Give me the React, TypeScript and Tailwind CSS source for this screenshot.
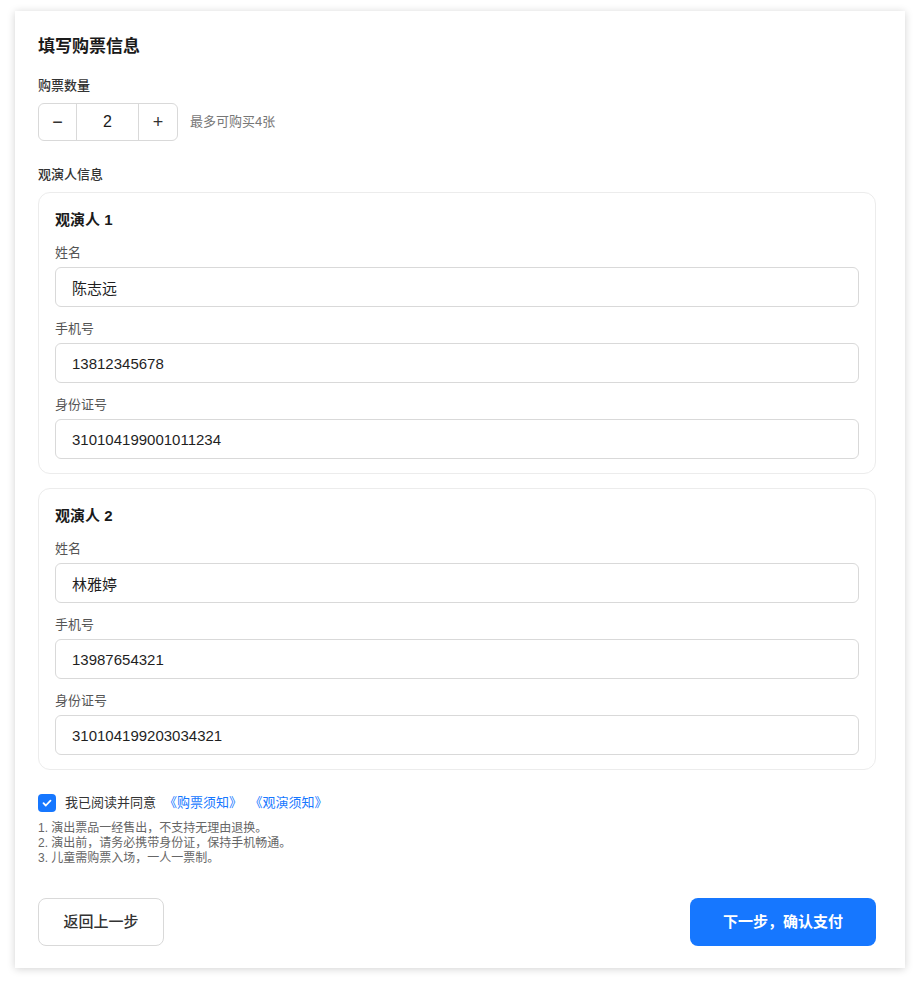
import React, { useState } from 'react';

type Viewer = { name: string; phone: string; id: string };

const viewers: Viewer[] = [
  { name: '陈志远', phone: '13812345678', id: '310104199001011234' },
  { name: '林雅婷', phone: '13987654321', id: '310104199203034321' },
];

function Field({ label, value }: { label: string; value: string }) {
  return (
    <div className="flex flex-col gap-1">
      <label className="text-[13px] leading-5 text-[#555]">{label}</label>
      <input
        readOnly
        value={value}
        className="h-10 w-full rounded-md border border-[#d9d9d9] bg-white px-4 text-[15px] text-[#1f1f1f] outline-none"
      />
    </div>
  );
}

function ViewerCard({ index, viewer }: { index: number; viewer: Viewer }) {
  return (
    <div className="flex flex-col gap-3 rounded-xl border border-[#ececec] px-4 pt-4 pb-[14px]">
      <div className="text-[15px] font-semibold leading-[22px] text-[#1a1a1a]">观演人 {index}</div>
      <Field label="姓名" value={viewer.name} />
      <Field label="手机号" value={viewer.phone} />
      <Field label="身份证号" value={viewer.id} />
    </div>
  );
}

export default function App() {
  const [count, setCount] = useState(2);
  const [agreed, setAgreed] = useState(true);

  return (
    <div className="min-h-screen bg-white px-[15px] pt-[11px] pb-5 font-['Liberation_Sans','Noto_Sans_CJK_SC',sans-serif]">
      <div className="flex flex-col bg-white pl-[23px] pr-[29px] pt-6 pb-[22px] shadow-[0_1px_8px_rgba(0,0,0,0.18)]">
        <h2 className="text-[17px] font-bold leading-6 text-[#1a1a1a]">填写购票信息</h2>

        {/* 数量 */}
        <div className="mt-[17px] text-[13px] font-medium leading-5 text-[#333]">购票数量</div>
        <div className="mt-[7px] flex items-center gap-3">
          <div className="flex h-[38px] overflow-hidden rounded-md border border-[#d9d9d9]">
            <button
              className="flex w-[37px] items-center justify-center text-lg text-[#333]"
              onClick={() => setCount(Math.max(1, count - 1))}
            >
              −
            </button>
            <div className="flex w-[63px] items-center justify-center border-x border-[#d9d9d9] text-base text-[#1a1a1a]">
              {count}
            </div>
            <button
              className="flex w-[38px] items-center justify-center text-lg text-[#333]"
              onClick={() => setCount(Math.min(4, count + 1))}
            >
              +
            </button>
          </div>
          <span className="text-[13px] text-[#777]">最多可购买4张</span>
        </div>

        {/* 观演人 */}
        <div className="mt-6 text-[13px] font-medium leading-5 text-[#333]">观演人信息</div>
        <div className="mt-[7px] flex flex-col gap-[14px]">
          {viewers.map((v, i) => (
            <ViewerCard key={i} index={i + 1} viewer={v} />
          ))}
        </div>

        {/* 协议 */}
        <div className="mt-[23px] flex items-center gap-[9px]">
          <button
            onClick={() => setAgreed(!agreed)}
            className={`flex h-[18px] w-[18px] items-center justify-center rounded-[4px] ${agreed ? 'bg-[#1677ff]' : 'border border-[#d9d9d9] bg-white'}`}
          >
            {agreed && (
              <svg width="12" height="12" viewBox="0 0 12 12" fill="none">
                <path d="M2.5 6.2l2.3 2.3 4.7-4.9" stroke="white" strokeWidth="1.8" strokeLinecap="round" strokeLinejoin="round" />
              </svg>
            )}
          </button>
          <span className="text-[13px] leading-5 text-[#333]">
            我已阅读并同意<a className="ml-[8px] text-[#1677ff]">《购票须知》</a>
            <a className="ml-[14px] text-[#1677ff]">《观演须知》</a>
          </span>
        </div>
        <div className="mt-2 text-[12px] leading-[15px] text-[#666]">
          <p>1. 演出票品一经售出，不支持无理由退换。</p>
          <p>2. 演出前，请务必携带身份证，保持手机畅通。</p>
          <p>3. 儿童需购票入场，一人一票制。</p>
        </div>

        {/* 按钮 */}
        <div className="mt-8 flex items-center justify-between">
          <button className="h-12 w-[126px] rounded-lg border border-[#d9d9d9] bg-white text-[15px] font-medium text-[#333]">
            返回上一步
          </button>
          <button className="h-12 w-[186px] rounded-lg bg-[#1677ff] text-[15px] font-semibold text-white">
            下一步，确认支付
          </button>
        </div>
      </div>
    </div>
  );
}
